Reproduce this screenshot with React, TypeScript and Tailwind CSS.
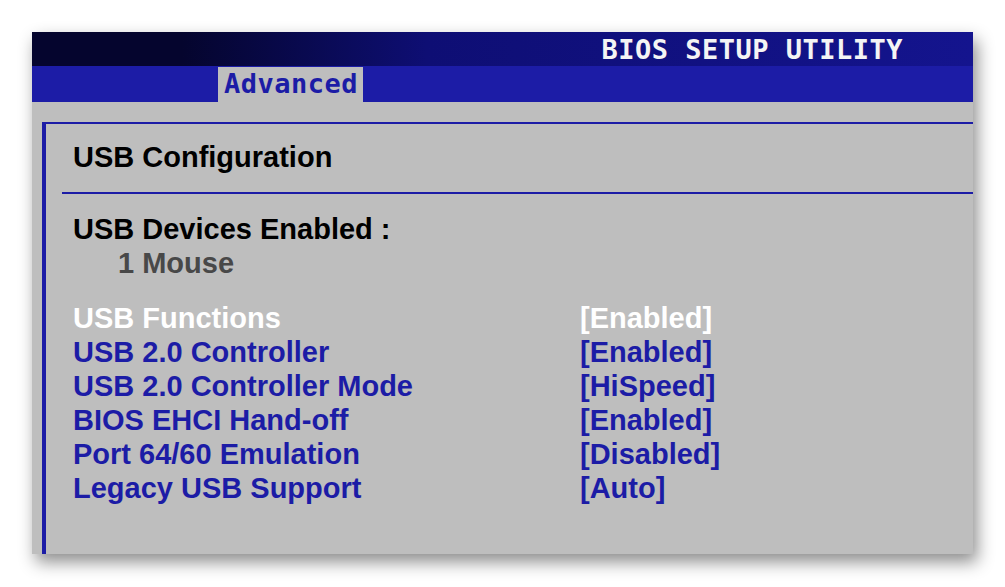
import React from 'react';

interface BiosItem {
  label: string;
  value: string;
  selected?: boolean;
}

const items: BiosItem[] = [
  { label: 'USB Functions', value: '[Enabled]', selected: true },
  { label: 'USB 2.0 Controller', value: '[Enabled]' },
  { label: 'USB 2.0 Controller Mode', value: '[HiSpeed]' },
  { label: 'BIOS EHCI Hand-off', value: '[Enabled]' },
  { label: 'Port 64/60 Emulation', value: '[Disabled]' },
  { label: 'Legacy USB Support', value: '[Auto]' },
];

const pixelFont = { fontFamily: '"DejaVu Sans Mono", "Liberation Mono", monospace' };
const sansFont = { fontFamily: '"Liberation Sans", Arial, sans-serif' };

export default function App() {
  return (
    <div className="w-[1005px] h-[587px] bg-white pt-[32px] pl-[32px] overflow-hidden">
      <div className="w-[941px] h-[522px] flex flex-col bg-[#bebebe] shadow-[4px_8px_16px_rgba(0,0,0,0.45)] overflow-hidden">
        {/* title bar */}
        <div className="h-[34px] flex items-center justify-end pr-[70px] bg-gradient-to-r from-[#05052e] from-[16%] via-[#0e0e74] via-[42%] to-[#14148e]">
          <span
            className="text-[27px] font-bold tracking-[0.5px] text-[#f4f4f4] leading-none"
            style={pixelFont}
          >
            BIOS SETUP UTILITY
          </span>
        </div>

        {/* tab bar */}
        <div className="h-[36px] flex items-end bg-[#1c1ca6]">
          <div className="ml-[186px] w-[145px] h-[35px] bg-[#bebebe] flex items-center pl-[6px] pb-[3px]">
            <span
              className="text-[27px] font-bold tracking-[0.5px] text-[#1c1ca6] leading-none"
              style={pixelFont}
            >
              Advanced
            </span>
          </div>
        </div>

        {/* content */}
        <div className="flex-1 pl-[10px] pt-[20px] flex">
          <div className="flex-1 border-l-4 border-t-2 border-[#1c1ca6] pt-[16px]" style={sansFont}>
            <div className="pl-[27px] text-[29px] leading-[34px] font-bold text-black">
              USB Configuration
            </div>
            <div className="ml-[16px] mt-[18px] h-[2px] bg-[#1c1ca6]" />

            <div className="pl-[27px] mt-[18px] text-[29px] leading-[34px] font-bold">
              <div className="text-black">USB Devices Enabled :</div>
              <div className="pl-[45px] text-[#484848]">1 Mouse</div>

              <div className="mt-[21px] flex flex-col">
                {items.map((item) => (
                  <div
                    key={item.label}
                    className={`flex ${item.selected ? 'text-white' : 'text-[#1c1ca6]'}`}
                  >
                    <span className="w-[507px] shrink-0">{item.label}</span>
                    <span>{item.value}</span>
                  </div>
                ))}
              </div>
            </div>
          </div>
        </div>
      </div>
    </div>
  );
}
